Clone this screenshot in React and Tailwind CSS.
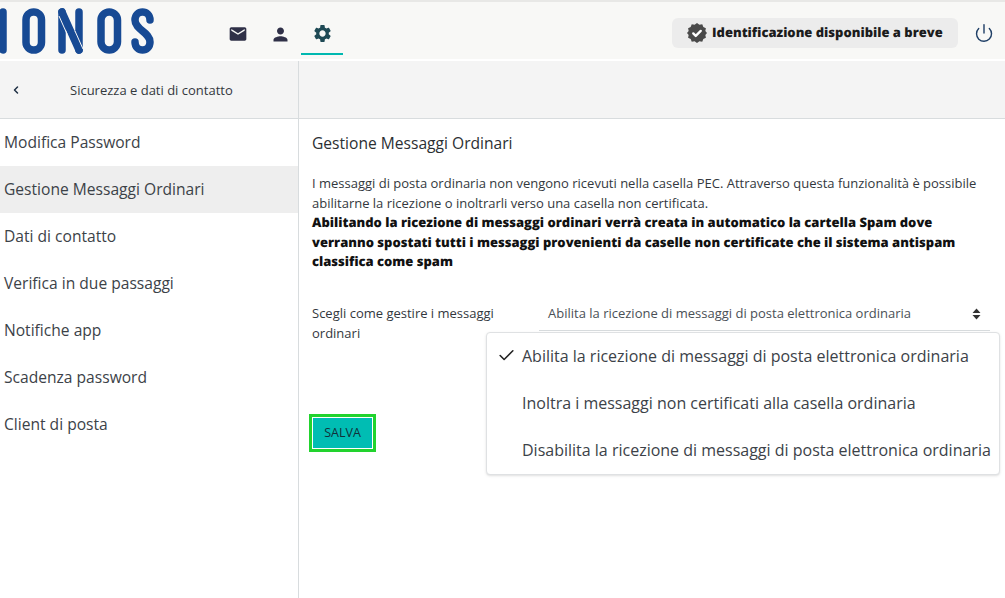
import React from 'react';
import { ChevronLeft, Check, Power } from 'lucide-react';
import { MdEmail, MdPerson, MdSettings } from 'react-icons/md';

const menuItems = [
    'Modifica Password',
    'Gestione Messaggi Ordinari',
    'Dati di contatto',
    'Verifica in due passaggi',
    'Notifiche app',
    'Scadenza password',
    'Client di posta',
];

const Logo = () => (
    <svg width="156" height="46" viewBox="0 0 156 46" className="shrink-0" fill="none" stroke="#174a94" strokeWidth="7.5" strokeLinecap="round" strokeLinejoin="round">
        <path d="M3 4v38" />
        <rect x="26" y="4" width="15.5" height="38" rx="7.7" />
        <path d="M62 42V4" />
        <path d="M79 4v38" />
        <path d="M62 4l17 38" />
        {/* stacco sottile tra la diagonale della N e le aste */}
        <path d="M59 8l8 18M75 23l8 18" stroke="#f8f8f6" strokeWidth="1" strokeLinecap="butt" />
        <rect x="101" y="4" width="16.5" height="38" rx="8.2" />
        <path d="M150 12c0-5-3.500-8-7.500-8s-7.500 3-7.500 8c0 10 15 12 15 22 0 5-3.500 8-7.500 8s-7.500-3-7.500-8" />
    </svg>
);

const VerifiedBadge = () => (
    <svg width="20" height="20" viewBox="0 0 24 24" className="shrink-0">
        <path fill="#4a4a4a" d="M12 0l2.900 2 3.400-.4 1.300 3.200 3.100 1.500-.7 3.400L24 12l-2 2.300.7 3.400-3.100 1.500-1.300 3.200-3.400-.4L12 24l-2.900-2-3.400.4-1.300-3.200-3.100-1.500.7-3.400L0 12l2-2.300-.7-3.400 3.100-1.500 1.300-3.200 3.400.4z" />
        <path fill="none" stroke="#fff" strokeWidth="2.8" strokeLinecap="round" strokeLinejoin="round" d="M7.500 12.500l3 3 6-6" />
    </svg>
);

export default function App() {
    return (
        <div className="w-[1005px] h-[598px] overflow-hidden bg-white flex flex-col font-['Open_Sans',sans-serif] text-[#1f2933]">

            {/* Barra superiore */}
            <header className="h-[59px] shrink-0 bg-[#f8f8f6] border-t-2 border-[#e8e8e6] flex items-center">
                <div className="w-[155px] h-full flex items-center">
                    <Logo />
                </div>
                <nav className="ml-[64px] flex h-full items-start">
                    <div className="w-[38px] h-[52px] pt-[12px] flex justify-center items-center">
                        <MdEmail size={20} color="#2f3047" />
                    </div>
                    <div className="w-[44px] h-[52px] pt-[12px] pl-[2px] flex justify-center items-center">
                        <MdPerson size={21} color="#2f3047" />
                    </div>
                    <div className="w-[42px] h-[53px] pt-[12px] flex justify-center items-center border-b-2 border-[#00b8b0]">
                        <MdSettings size={21} color="#1f4a55" />
                    </div>
                </nav>
                <div className="ml-auto pt-[4px] flex items-center">
                    <div className="h-[30px] w-[286px] rounded-md bg-[#ececec] flex items-center pl-[15px] gap-[5px]">
                        <VerifiedBadge />
                        <span className="text-[13px] font-extrabold [text-rendering:geometricPrecision] text-[#1c1c1c] whitespace-nowrap">Identificazione disponibile a breve</span>
                    </div>
                    <div className="w-[47px] pl-[5px] flex justify-center">
                        <Power size={20} stroke="#1f3f66" strokeWidth={1.7} />
                    </div>
                </div>
            </header>

            <div className="h-[2px] shrink-0 bg-white" />

            {/* Intestazione sezione */}
            <div className="h-[58px] shrink-0 bg-[#f4f4f4] border-b border-[#d8dcde] flex">
                <div className="w-[299px] border-r border-[#d8dcde] flex items-center">
                    <ChevronLeft size={12} strokeWidth={3} className="ml-[10px] text-[#1f3045]" />
                    <span className="ml-[48px] pt-[2px] text-[13px] text-[#33383d]">Sicurezza e dati di contatto</span>
                </div>
            </div>

            <div className="flex flex-1">
                {/* Menu laterale */}
                <aside className="w-[299px] shrink-0 border-r border-[#d8dcde]">
                    <ul>
                        {menuItems.map((item, i) => (
                            <li key={item} className={`h-[47px] pl-1 flex items-center text-[15.6px] text-[#3c4248] ${i === 1 ? 'bg-[#eeeeee]' : ''}`}>
                                {item}
                            </li>
                        ))}
                    </ul>
                </aside>

                {/* Contenuto */}
                <main className="flex-1 pl-[13px] pr-[12px] relative">
                    <h1 className="mt-[13px] text-[15.6px] leading-[22px] text-[#2b2f33]">Gestione Messaggi Ordinari</h1>
                    <p className="mt-[20px] text-[13px] leading-[19.6px] text-[#33383d]">
                        I messaggi di posta ordinaria non vengono ricevuti nella casella PEC. Attraverso questa funzionalità è possibile abilitarne la ricezione o inoltrarli verso una casella non certificata.
                        <br />
                        <strong className="font-extrabold [text-rendering:geometricPrecision] text-[#111]">Abilitando la ricezione di messaggi ordinari verrà creata in automatico la cartella Spam dove verranno spostati tutti i messaggi provenienti da caselle non certificate che il sistema antispam classifica come spam</strong>
                    </p>

                    <div className="mt-[24px] flex">
                        <label className="w-[227px] pt-[8px] pr-[30px] text-[13px] leading-[19.6px] text-[#33383d]">Scegli come gestire i messaggi ordinari</label>
                        <div className="w-[451px] h-[34px] mt-[1px] pt-[1px] border-b border-[#d8dcde] pl-[9px] pr-[9px] flex items-center justify-between text-[13px] text-[#4a5056]">
                            <span>Abilita la ricezione di messaggi di posta elettronica ordinaria</span>
                            <svg width="9" height="12" viewBox="0 0 9 12" fill="#333">
                                <path d="M4.500 0.500L8.500 5H.500zM4.500 11.500L.500 7h8z" />
                            </svg>
                        </div>
                    </div>

                    <button className="mt-[71px] box-content w-[61px] h-[32px] border-[3px] border-[#22d32e] outline outline-1 -outline-offset-4 outline-white bg-[#00bdb3] text-[12.500px] text-[#12303a] flex items-center justify-center -ml-[3px]">
                        SALVA
                    </button>

                    {/* Menu a tendina aperto */}
                    <div className="absolute left-[187px] top-[213px] w-[514px] h-[143px] bg-white rounded border border-[#dfe1e3] shadow-sm flex flex-col justify-center text-base text-[#3c4248]">
                        <div className="h-[47px] pb-[2px] flex items-center">
                            <Check size={19} strokeWidth={2} className="ml-[10px] mr-[6px] text-[#222]" />
                            <span className="whitespace-nowrap">Abilita la ricezione di messaggi di posta elettronica ordinaria</span>
                        </div>
                        <div className="h-[47px] pb-[2px] flex items-center pl-[35px] whitespace-nowrap">Inoltra i messaggi non certificati alla casella ordinaria</div>
                        <div className="h-[47px] pb-[2px] flex items-center pl-[35px] whitespace-nowrap">Disabilita la ricezione di messaggi di posta elettronica ordinaria</div>
                    </div>
                </main>
            </div>
        </div>
    );
}
